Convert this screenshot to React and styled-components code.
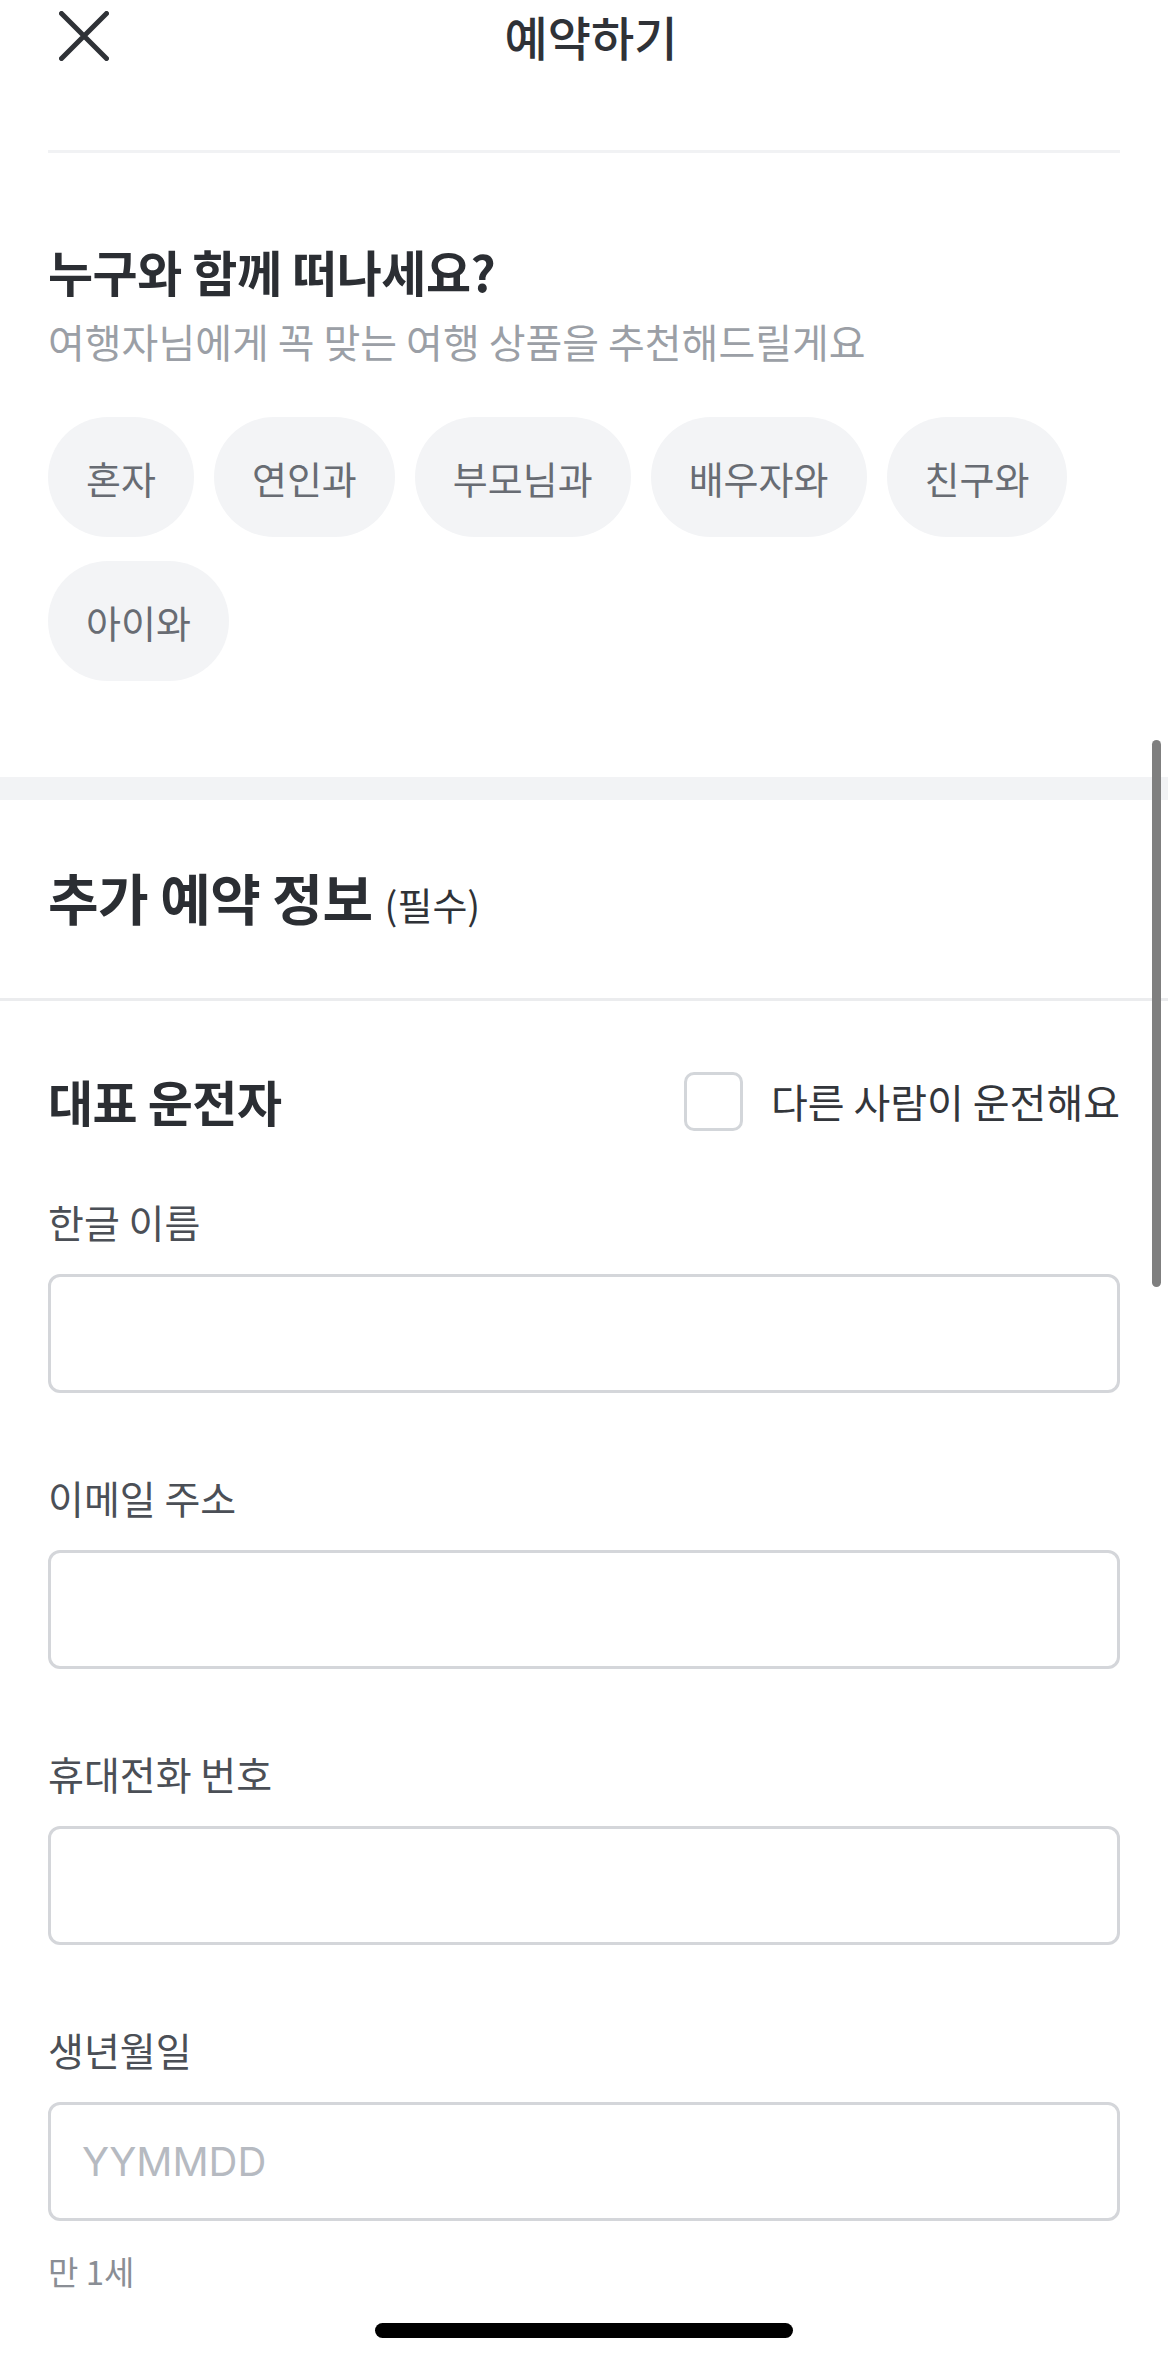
import React from "react";
import styled, { createGlobalStyle } from "styled-components";

const GlobalStyle = createGlobalStyle`
  body {
    margin: 0;
    background: #fff;
  }
  * {
    box-sizing: border-box;
  }
`;

const Page = styled.div`
  position: relative;
  width: 1168px;
  min-height: 2359px;
  background: #fff;
  font-family: "Noto Sans CJK KR", "Noto Sans", sans-serif;
  color: #2f3237;
  overflow: hidden;
`;

const TopBar = styled.header`
  display: grid;
  grid-template-columns: 1fr auto 1fr;
  align-items: center;
  height: 72px;
`;

const CloseButton = styled.button`
  justify-self: start;
  display: flex;
  margin-left: 59px;
  padding: 0;
  border: none;
  background: none;
  cursor: pointer;
`;

const Title = styled.h1`
  margin: 0;
  padding-left: 14px;
  font-size: 47px;
  font-weight: 500;
  line-height: 60px;
  color: #2f3237;
`;

const HairLine = styled.div`
  height: 3px;
  background: ${(p) => p.color || "#f1f2f4"};
  margin: ${(p) => p.margin || "0"};
`;

const Section = styled.section`
  padding: 0 48px;
`;

const Heading = styled.h2`
  margin: ${(p) => p.mt || 0}px 0 0;
  font-size: ${(p) => p.size || 49}px;
  font-weight: 700;
  line-height: ${(p) => p.lh || 62}px;
  color: #2b2e33;
  letter-spacing: -0.5px;

  small {
    font-size: 38px;
    font-weight: 400;
    margin-left: 12px;
    letter-spacing: 0;
    color: #2f3237;
  }
`;

const Subtitle = styled.p`
  margin: 14px 0 0;
  font-size: 40px;
  line-height: 50px;
  color: #9b9fa6;
`;

const ChipList = styled.div`
  display: flex;
  flex-wrap: wrap;
  gap: 24px 20px;
  margin-top: 51px;
`;

const Chip = styled.button`
  height: 120px;
  padding: 0 38px;
  border: none;
  border-radius: 60px;
  background: #f3f4f6;
  font-family: inherit;
  font-size: 38px;
  color: #686c73;
  cursor: pointer;
`;

const Band = styled.div`
  height: 23px;
  margin-top: 96px;
  background: #f2f3f5;
`;

const DriverRow = styled.div`
  display: flex;
  align-items: center;
  justify-content: space-between;
  height: 60px;
  margin-top: 70px;
`;

const CheckLabel = styled.label`
  display: flex;
  align-items: center;
  gap: 28px;
  font-size: 40px;
  color: #33363b;
  cursor: pointer;
`;

const CheckBox = styled.span`
  width: 59px;
  height: 59px;
  border: 3px solid #d3d6da;
  border-radius: 10px;
  background: #fff;
`;

const Field = styled.div`
  margin-top: ${(p) => p.mt}px;
`;

const Label = styled.div`
  font-size: 39px;
  line-height: 50px;
  color: #4b4f56;
`;

const Input = styled.input`
  display: block;
  width: 100%;
  height: 119px;
  margin-top: 28px;
  padding: 0 31px;
  border: 3px solid #d4d6da;
  border-radius: 12px;
  font-family: Inter, "Noto Sans CJK KR", sans-serif;
  font-size: 40px;
  color: #2f3237;
  background: #fff;
  outline: none;

  &::placeholder {
    color: #b6bac1;
  }
`;

const Hint = styled.div`
  margin-top: 28px;
  font-size: 33px;
  line-height: 44px;
  color: #8a8e95;
`;

const HomeIndicator = styled.div`
  width: 418px;
  height: 15px;
  margin: 30px auto 0;
  border-radius: 8px;
  background: #000;
`;

const ScrollThumb = styled.div`
  position: absolute;
  top: 740px;
  right: 7px;
  width: 9px;
  height: 547px;
  border-radius: 5px;
  background: #7f7f7f;
`;

const companions = ["혼자", "연인과", "부모님과", "배우자와", "친구와", "아이와"];

const fields = [
  { label: "한글 이름", mt: 65 },
  { label: "이메일 주소", mt: 79 },
  { label: "휴대전화 번호", mt: 79 },
  { label: "생년월일", mt: 79, placeholder: "YYMMDD" },
];

const CloseIcon = () => (
  <svg width="50" height="50" viewBox="0 0 50 50" fill="none">
    <path
      d="M2.5 2.5L47.5 47.5M47.5 2.5L2.5 47.5"
      stroke="#2f3237"
      strokeWidth="5"
      strokeLinecap="round"
    />
  </svg>
);

const App = () => {
  return (
    <Page>
      <GlobalStyle />
      <TopBar>
        <CloseButton aria-label="닫기">
          <CloseIcon />
        </CloseButton>
        <Title>예약하기</Title>
        <span />
      </TopBar>
      <HairLine margin="78px 48px 0" />

      <Section>
        <Heading mt={87}>누구와 함께 떠나세요?</Heading>
        <Subtitle>여행자님에게 꼭 맞는 여행 상품을 추천해드릴게요</Subtitle>
        <ChipList>
          {companions.map((c) => (
            <Chip key={c}>{c}</Chip>
          ))}
        </ChipList>
      </Section>

      <Band />

      <Section>
        <Heading mt={61} size={55} lh={70}>
          추가 예약 정보<small>(필수)</small>
        </Heading>
      </Section>
      <HairLine color="#ebecee" margin="59px 0 0" />

      <Section>
        <DriverRow>
          <Heading size={49} lh={60}>대표 운전자</Heading>
          <CheckLabel>
            <CheckBox />
            다른 사람이 운전해요
          </CheckLabel>
        </DriverRow>

        {fields.map((f) => (
          <Field key={f.label} mt={f.mt}>
            <Label>{f.label}</Label>
            <Input placeholder={f.placeholder} />
          </Field>
        ))}
        <Hint>만 1세</Hint>
      </Section>

      <HomeIndicator />
      <ScrollThumb />
    </Page>
  );
};

export default App;
